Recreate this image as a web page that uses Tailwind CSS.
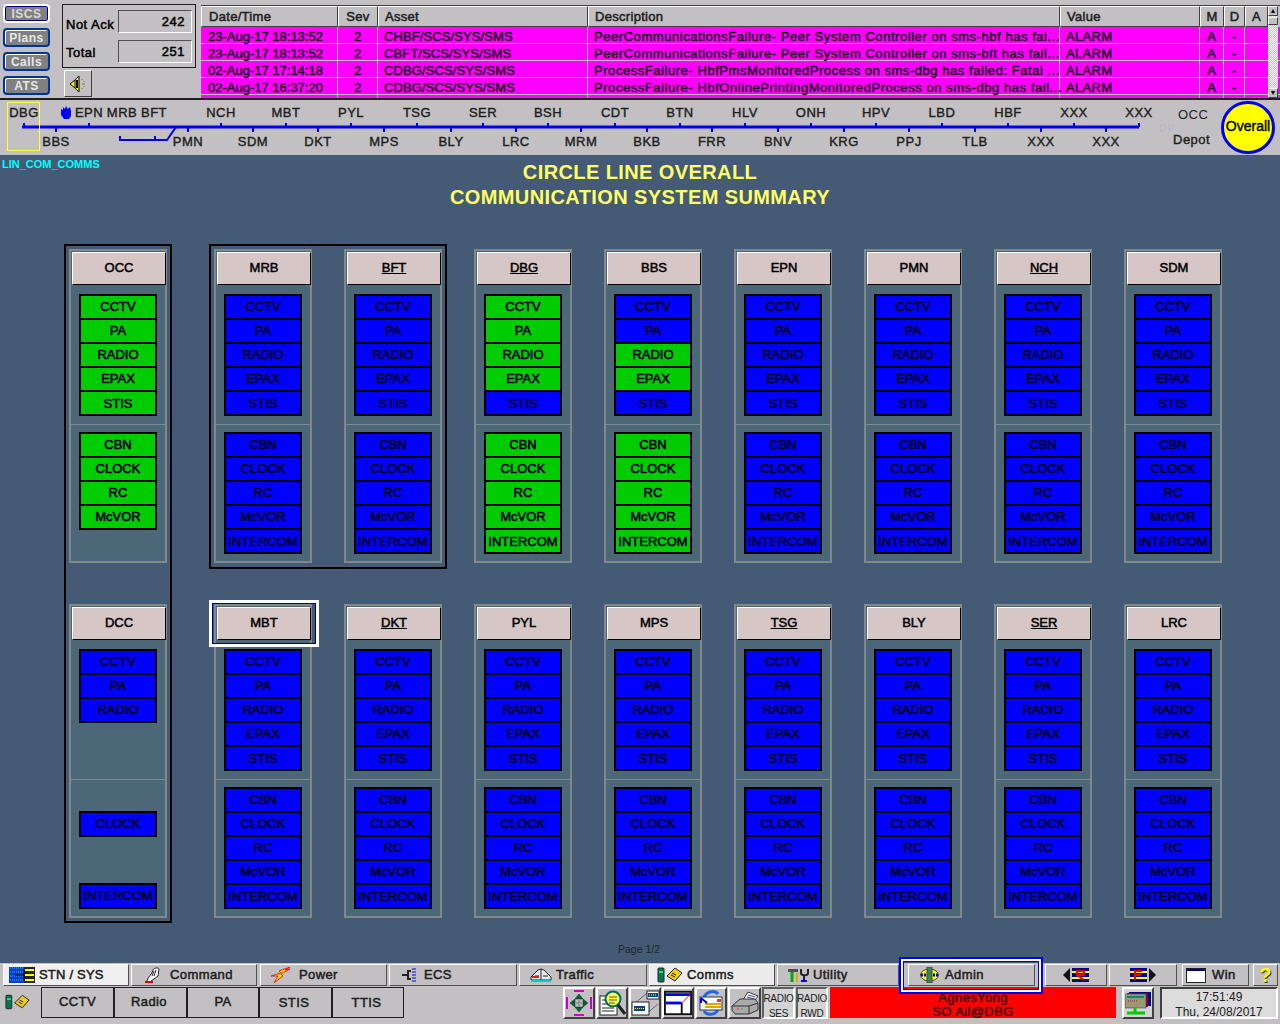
<!DOCTYPE html>
<html lang="en">

<head>
   <meta charset="UTF-8">
   <title>Communication System Summary</title>
   <script src="https://cdn.jsdelivr.net/npm/@tailwindcss/browser@4"></script>
</head>

<body class="bg-[#c3c0c3]">
   <div class="w-[1280px] h-[1024px] overflow-hidden flex flex-col font-['Liberation_Sans',sans-serif] text-black">

      <!-- alarm header -->
      <div class="h-[100px] flex border-b-2 border-[#202020] overflow-hidden">
         <div class="w-[62px] pl-[3px] pt-[4px] flex flex-col gap-[5px]">
            <div class="w-[47px] h-[19px] rounded-[4px] border-2 border-white bg-[#808080] text-[#d8d8d8] text-[12px] font-bold leading-[16px] tracking-[0.5px] text-center shadow-[inset_0_0_0_1px_#000080]">ISCS</div>
            <div class="w-[47px] h-[19px] rounded-[4px] border-2 border-[#003399] bg-[#808080] text-[#e8e8e8] text-[12px] font-bold leading-[16px] tracking-[0.5px] text-center shadow-[inset_1px_1px_0_#ffffff]">Plans</div>
            <div class="w-[47px] h-[19px] rounded-[4px] border-2 border-[#003399] bg-[#808080] text-[#e8e8e8] text-[12px] font-bold leading-[16px] tracking-[0.5px] text-center shadow-[inset_1px_1px_0_#ffffff]">Calls</div>
            <div class="w-[47px] h-[19px] rounded-[4px] border-2 border-[#003399] bg-[#808080] text-[#e8e8e8] text-[12px] font-bold leading-[16px] tracking-[0.5px] text-center shadow-[inset_1px_1px_0_#ffffff]">ATS</div>
         </div>
         <div class="w-[139px] pt-[4px]">
            <div class="w-[134px] h-[64px] border border-[#202020] pl-[3px] pr-[3px] pt-[5px] flex flex-col gap-[7px] text-[13px] tracking-[0.5px] [-webkit-text-stroke:0.5px_currentColor]">
               <div class="flex justify-between h-[23px]">
                  <span class="pt-[5px]">Not Ack</span>
                  <span class="w-[74px] h-[23px] border border-t-[#505050] border-l-[#505050] border-r-white border-b-white text-right pr-[6px] leading-[21px]">242</span>
               </div>
               <div class="flex justify-between h-[23px]">
                  <span class="pt-[3px]">Total</span>
                  <span class="w-[74px] h-[23px] border border-t-[#505050] border-l-[#505050] border-r-white border-b-white text-right pr-[6px] leading-[21px]">251</span>
               </div>
            </div>
            <div class="ml-[2px] mt-[2px] w-[28px] h-[27px] border border-t-white border-l-white border-r-[#404040] border-b-[#404040] flex items-center justify-center">
               <svg width="18" height="18" viewBox="0 0 18 18">
                  <path d="M1 9 L6 5 L10 1 V17 L6 13 Z" fill="#ffff00" stroke="#000" />
                  <path d="M6 5 V13" stroke="#000" />
                  <path d="M8 5 V13" stroke="#000" stroke-width="2" />
                  <path d="M13 4 V5 M15 6 V7 M13 9 H16 M15 11 V12 M13 13 V14" stroke="#707070" />
               </svg>
            </div>
         </div>
         <div class="flex-1 relative">
            <div class="mt-[5px] border-t border-[#404040] h-[93px] overflow-hidden" id="alarmTable"></div>
            <div class="absolute top-[6px] right-[2px] w-[10px] h-[92px] flex flex-col bg-[repeating-conic-gradient(#c3c0c3_0_25%,#ffffff_0_50%)] bg-[length:2px_2px]">
               <div class="h-[10px] bg-[#c3c0c3] border border-t-white border-l-white border-r-[#404040] border-b-[#404040] text-[7px] leading-[8px] text-center">▲</div>
               <div class="h-[8px] mt-px bg-[#c3c0c3] border border-t-white border-l-white border-r-[#404040] border-b-[#404040]"></div>
               <div class="mt-auto h-[10px] bg-[#c3c0c3] border border-t-white border-l-white border-r-[#404040] border-b-[#404040] text-[7px] leading-[8px] text-center">▼</div>
            </div>
         </div>
      </div>

      <!-- line map -->
      <div class="h-[55px] relative text-[13px] tracking-[0.5px] text-[#202020] [-webkit-text-stroke:0.4px_currentColor]" id="lineMap">
         <svg class="absolute left-0 top-0" width="1280" height="55" viewBox="0 0 1280 55">
            <path id="lineTicks" d="" stroke="#0000ee" stroke-width="2" fill="none" />
            <path d="M22 27 H1139" stroke="#0000ee" stroke-width="3" />
            <path d="M120 36 V40 H167 L176 27 M155 36 V40" stroke="#0000ee" stroke-width="2" fill="none" />
         </svg>
         <div class="absolute left-[7px] top-[2px] w-[33px] h-[49px] border border-[#ffff44]"></div>
         <svg class="absolute left-[60px] top-[6px]" width="12" height="13" viewBox="0 0 12 13">
            <path d="M1 3 L3 4 L3 1 L5 3 L6 0 L8 3 L10 1 L11 5 L11 10 L9 13 L4 13 L1 9 Z" fill="#0000ee" />
         </svg>
         <div class="absolute left-[1159px] top-[23px] text-[11px] leading-[11px] font-bold text-[#b8b8c4] [-webkit-text-stroke:0]">DP</div>
         <div class="absolute left-[1221px] top-[1px] w-[54px] h-[53px] rounded-full bg-[#ffff00] border-[3px] border-[#0000ee] flex items-center justify-center text-[14px] leading-[14px] pb-[3px] text-black tracking-normal">Overall</div>
      </div>

      <!-- summary page -->
      <div class="h-[808px] bg-[#445a75] relative">
         <div class="h-[94px]">
            <div class="pl-[2px] pt-[3px] h-[6px] text-[11px] leading-[12px] font-bold text-[#00ffff]">LIN_COM_COMMS</div>
            <div class="text-center text-[20px] leading-[25px] mt-[-4px] font-bold tracking-[0.4px] text-[#ffff66] pt-[3px]">
               <p>CIRCLE LINE OVERALL</p>
               <p>COMMUNICATION SYSTEM SUMMARY</p>
            </div>
         </div>
         <div class="flex pl-[69px] gap-[32px]" id="rowOne"></div>
         <div class="flex pl-[69px] gap-[32px] mt-[41px]" id="rowTwo"></div>
         <div class="absolute left-[64px] top-[89px] w-[108px] h-[679px] border-2 border-black"></div>
         <div class="absolute left-[209px] top-[89px] w-[238px] h-[325px] border-2 border-black"></div>
         <div class="absolute left-[209px] top-[445px] w-[110px] h-[47px] border-[3px] border-white">
            <div class="w-full h-full border border-[#000080]"></div>
         </div>
         <div class="absolute left-[618px] top-[787px] text-[10.5px] text-[#1c2430]">Page 1/2</div>
      </div>

      <!-- bottom bars -->
      <div class="h-[61px] text-[13px] tracking-[0.4px] text-[#202020] [-webkit-text-stroke:0.5px_currentColor]">
         <div class="flex pl-[3px] pt-px h-[23px]">
            <div class="w-[126px] h-[22px] bg-[#f0f0f0] border border-t-white border-l-white border-r-[#505050] border-b-[#505050] flex items-center pl-[5px] gap-[4px] tracking-[0.2px]">
               <svg width="26" height="16" viewBox="0 0 26 16">
                  <rect width="15" height="16" fill="#0044cc" />
                  <path d="M1 1H14M1 5H14M1 9H14M1 13H14" stroke="#6699ff" stroke-dasharray="1 1" />
                  <rect x="15" width="11" height="16" fill="#222" />
                  <path d="M16 3H25M16 8H25M16 13H25" stroke="#ffff00" stroke-width="2" />
                  <path d="M6 8H15M15 3V13" stroke="#000" />
               </svg>
               <span>STN / SYS</span>
            </div>
            <div class="ml-[2px] w-[126px] h-[22px] border border-t-white border-l-white border-r-[#505050] border-b-[#505050] flex items-center pl-[13px] gap-[9px]">
               <svg width="16" height="16" viewBox="0 0 16 16">
                  <path d="M2 14 C3 9 7 8 8 3 C9 1 13 0 14 2 L13 9 L9 12 L6 14" fill="#fff" stroke="#222" />
                  <path d="M9 4 L7 9 M11 3 L9 9" stroke="#222" />
                  <rect x="0" y="14" width="8" height="2" fill="#dd0000" />
               </svg>
               <span>Command</span>
            </div>
            <div class="ml-[3px] w-[127px] h-[22px] border border-t-white border-l-white border-r-[#505050] border-b-[#505050] flex items-center pl-[10px] gap-[8px]">
               <svg width="20" height="16" viewBox="0 0 20 16">
                  <path d="M19 0 L8 4 L10 6 L0 9 L7 9 L3 16 L12 9 L10 7 L19 2 L14 3 Z" fill="#ffdd00" stroke="#e00000" stroke-width="0.8" />
               </svg>
               <span>Power</span>
            </div>
            <div class="ml-[2px] w-[128px] h-[22px] border border-t-white border-l-white border-r-[#505050] border-b-[#505050] flex items-center pl-[12px] gap-[7px]">
               <svg width="15" height="14" viewBox="0 0 15 14">
                  <path d="M0 7 H5 M6 2 V12 M6 3 H9 M6 11 H9" stroke="#222" stroke-width="2" />
                  <path d="M10 1 H15 M10 4 H15 M10 7 H15 M10 10 H15 M10 13 H15" stroke="#0000ee" stroke-dasharray="4 1" />
               </svg>
               <span>ECS</span>
            </div>
            <div class="ml-[2px] w-[128px] h-[22px] border border-t-white border-l-white border-r-[#505050] border-b-[#505050] flex items-center pl-[10px] gap-[4px]">
               <svg width="22" height="14" viewBox="0 0 22 14">
                  <path d="M1 9 L8 2 L11 1 L14 2 L21 9 V12 H1 Z" fill="#e8e8e8" stroke="#222" />
                  <path d="M11 1 V12 M5 8 H9 M13 8 H18" stroke="#222" />
                  <path d="M2 9 H9" stroke="#dd2222" stroke-width="2" />
                  <path d="M1 13 H21" stroke="#00cccc" stroke-width="2" />
               </svg>
               <span>Traffic</span>
            </div>
            <div class="ml-[2px] w-[126px] h-[22px] bg-[#ececec] border border-t-white border-l-white border-r-[#505050] border-b-[#505050] flex items-center pl-[7px] gap-[4px]">
               <svg width="26" height="16" viewBox="0 0 26 16">
                  <rect x="1" y="1" width="6" height="14" rx="1" fill="#007755" stroke="#222" />
                  <rect x="2" y="4" width="4" height="2" fill="#33dd88" />
                  <path d="M10 9 L18 1 L25 6 L18 14 Z" fill="#eecc22" stroke="#222" />
                  <path d="M15 6 L19 8 M14 8 L18 10" stroke="#222" />
               </svg>
               <span>Comms</span>
            </div>
            <div class="ml-[2px] w-[122px] h-[22px] border border-t-white border-l-white border-r-[#505050] border-b-[#505050] flex items-center pl-[9px] gap-[3px]">
               <svg width="23" height="16" viewBox="0 0 23 16">
                  <path d="M1 2 H11 V5 H1 Z" fill="#505050" />
                  <path d="M5 5 V15" stroke="#00aa00" stroke-width="3" />
                  <path d="M10 6 V15" stroke="#ddaa00" stroke-width="2" />
                  <path d="M14 2 V6 C14 9 21 9 21 6 V2 M17 9 V15" stroke="#222" stroke-width="2" fill="none" />
                  <path d="M14 14 H20" stroke="#0000ee" stroke-width="2" />
               </svg>
               <span>Utility</span>
            </div>
            <div class="ml-[9px] w-[127px] h-[22px] relative border border-t-white border-l-white border-r-[#505050] border-b-[#505050] flex items-center pl-[11px] gap-[6px]">
               <svg width="19" height="16" viewBox="0 0 19 16">
                  <ellipse cx="9.5" cy="8" rx="9" ry="6" fill="#ffff00" stroke="#444" />
                  <path d="M1 8 H18" stroke="#0000ee" stroke-width="3" stroke-dasharray="2 1" />
                  <rect x="7" y="0" width="5" height="16" fill="#338855" stroke="#444" />
               </svg>
               <span>Admin</span>
               <div class="absolute left-[-10px] top-[-8px] w-[144px] h-[37px] border-2 border-[#0000ee]">
                  <div class="w-full h-full border-2 border-white">
                     <div class="w-full h-full border border-[#0000ee]"></div>
                  </div>
               </div>
            </div>
            <div class="ml-[10px] w-[62px] h-[22px] border border-t-white border-l-white border-r-[#505050] border-b-[#505050] flex items-center justify-center">
               <svg width="26" height="14" viewBox="0 0 26 14">
                  <path d="M0 7 L7 0 V14 Z" fill="#111" />
                  <rect x="9" width="17" height="14" fill="#000088" />
                  <rect x="9" y="3" width="17" height="2" fill="#ffff00" />
                  <rect x="9" y="9" width="17" height="2" fill="#ffff00" />
                  <path d="M14 3 H21 V7 H14 Z M14 7 L21 12" stroke="#ee0000" stroke-width="2" fill="none" />
               </svg>
            </div>
            <div class="ml-[2px] w-[68px] h-[22px] border border-t-white border-l-white border-r-[#505050] border-b-[#505050] flex items-center justify-center">
               <svg width="26" height="14" viewBox="0 0 26 14">
                  <path d="M26 7 L19 0 V14 Z" fill="#111" />
                  <rect width="17" height="14" fill="#000088" />
                  <rect y="3" width="17" height="2" fill="#ffff00" />
                  <rect y="9" width="17" height="2" fill="#ffff00" />
                  <path d="M12 3 H5 V12 M5 7 H11" stroke="#ee0000" stroke-width="2" fill="none" />
               </svg>
            </div>
            <div class="ml-[5px] w-[67px] h-[22px] border border-t-white border-l-white border-r-[#505050] border-b-[#505050] flex items-center pl-[3px] gap-[6px]">
               <svg width="20" height="15" viewBox="0 0 20 15">
                  <rect x="0.5" y="0.5" width="19" height="14" fill="#fff" stroke="#222" />
                  <rect x="1" y="1" width="18" height="2" fill="#000088" />
               </svg>
               <span>Win</span>
            </div>
            <div class="ml-[4px] w-[25px] h-[22px] border border-t-white border-l-white border-r-[#505050] border-b-[#505050] text-center text-[#ffff00] text-[20px] leading-[20px] font-bold [text-shadow:1px_1px_#333] [-webkit-text-stroke:0]">?</div>
         </div>
         <div class="flex items-start mt-px">
            <div class="w-[41px] h-[31px] pl-[5px] pt-[7px]">
               <svg width="25" height="16" viewBox="0 0 26 16">
                  <rect x="1" y="1" width="6" height="14" rx="1" fill="#007755" stroke="#222" />
                  <rect x="2" y="4" width="4" height="2" fill="#33dd88" />
                  <path d="M10 9 L18 1 L25 6 L18 14 Z" fill="#eecc22" stroke="#222" />
                  <path d="M15 6 L19 8 M14 8 L18 10" stroke="#222" />
               </svg>
            </div>
            <div class="w-[73px] h-[31px] border border-[#202020] text-center leading-[28px]">CCTV</div>
            <div class="w-[73px] h-[31px] border border-[#202020] pr-[3px] text-center leading-[28px]">Radio</div>
            <div class="w-[72px] h-[31px] border border-[#202020] text-center leading-[28px]">PA</div>
            <div class="w-[73px] h-[31px] border border-[#202020] pr-[3px] text-center leading-[30px]">STIS</div>
            <div class="w-[72px] h-[31px] border border-[#202020] pr-[3px] text-center leading-[30px]">TTIS</div>
            <div class="ml-[159px] flex gap-[1px]">
               <div class="w-[32px] h-[32px] border-2 border-t-white border-l-white border-r-[#404040] border-b-[#404040] flex items-center justify-center">
                  <svg width="26" height="26" viewBox="0 0 26 26">
                     <path d="M1 7 V19 M25 7 V19 M8 1 H18 M8 25 H18" stroke="#cc00cc" stroke-width="2" />
                     <path d="M13 4 L9 9 H17 Z M13 22 L9 17 H17 Z M4 13 L9 9 V17 Z M22 13 L17 9 V17 Z" fill="#006633" stroke="#222" stroke-width="0.5" />
                     <path d="M13 9 V17 M9 13 H17" stroke="#999" stroke-width="2" />
                  </svg>
               </div>
               <div class="w-[32px] h-[32px] border-2 border-t-white border-l-white border-r-[#404040] border-b-[#404040] flex items-center justify-center">
                  <svg width="28" height="26" viewBox="0 0 28 26">
                     <rect x="2" y="6" width="17" height="19" fill="#fff" stroke="#222" />
                     <path d="M4 10 H9 M4 14 H9 M4 18 H16 M4 21 H16" stroke="#222" />
                     <circle cx="15" cy="9" r="7.500" fill="#ffff44" stroke="#006666" stroke-width="2" />
                     <path d="M11 7 H19 M11 10 H19 M11 13 H17" stroke="#555" />
                     <path d="M20 15 L27 24" stroke="#222" stroke-width="3" />
                  </svg>
               </div>
               <div class="w-[32px] h-[32px] border-2 border-t-white border-l-white border-r-[#404040] border-b-[#404040] flex items-center justify-center">
                  <svg width="28" height="26" viewBox="0 0 28 26">
                     <path d="M3 14 L16 3 M14 25 L27 14" stroke="#666" />
                     <rect x="16" y="1" width="12" height="8" fill="#fff" stroke="#222" />
                     <rect x="17" y="3" width="10" height="4" fill="#0044aa" />
                     <rect x="1" y="12" width="17" height="13" fill="#fff" stroke="#222" />
                     <rect x="3" y="16" width="11" height="5" fill="#0044aa" />
                     <path d="M4 18.500 H13 M18 5 H26" stroke="#ffff00" stroke-dasharray="1 1" />
                  </svg>
               </div>
               <div class="w-[32px] h-[32px] border-2 border-t-white border-l-white border-r-[#404040] border-b-[#404040] flex items-center justify-center">
                  <svg width="30" height="26" viewBox="0 0 30 26">
                     <rect x="1" y="1" width="28" height="24" fill="#fff" stroke="#111" stroke-width="2" />
                     <path d="M1 4 H29" stroke="#0000ee" stroke-width="3" />
                     <path d="M2 13 H19" stroke="#0000ee" stroke-width="3" />
                     <path d="M19 13 V25" stroke="#111" stroke-width="2" />
                     <path d="M19 13 L29 3" stroke="#ee0000" />
                  </svg>
               </div>
               <div class="w-[32px] h-[32px] border-2 border-t-white border-l-white border-r-[#404040] border-b-[#404040] flex items-center justify-center">
                  <svg width="26" height="26" viewBox="0 0 26 26">
                     <path d="M6 7 C9 1 17 0 20 4" stroke="#2266ee" stroke-width="3" fill="none" />
                     <path d="M20 20 C17 25 9 26 6 21" stroke="#2266ee" stroke-width="3" fill="none" />
                     <rect x="2" y="7" width="22" height="13" fill="#fff" stroke="#333" />
                     <path d="M7 14 H23 M7 17 H23" stroke="#ddaa00" stroke-width="2" />
                     <path d="M3 8 L9 13 M3 8 L3 13" stroke="#0000ee" stroke-width="2" />
                     <rect x="19" y="9" width="4" height="3" fill="#ee3333" />
                  </svg>
               </div>
               <div class="w-[33px] h-[32px] border-2 border-t-white border-l-white border-r-[#404040] border-b-[#404040] flex items-center justify-center">
                  <svg width="28" height="24" viewBox="0 0 28 24">
                     <path d="M12 9 L17 1 L27 5 L21 13 Z" fill="#fff" stroke="#333" />
                     <path d="M16 6 L23 8 M17 4 L24 6" stroke="#2244aa" />
                     <path d="M1 15 L9 8 H24 L27 12 V19 L18 23 H4 L1 19 Z" fill="#aaa" stroke="#333" />
                     <path d="M1 15 H18 L27 12 M18 15 V23" stroke="#333" fill="none" />
                     <path d="M6 18 H8" stroke="#ee3333" />
                     <path d="M10 18 H12" stroke="#33aa33" />
                  </svg>
               </div>
               <div class="w-[33px] h-[32px] bg-[#d4d4d4] border-2 border-t-[#606060] border-l-[#606060] border-r-white border-b-white flex flex-col items-center text-[10px] leading-[15px] tracking-[-0.3px] pt-[2px] [-webkit-text-stroke:0]">
                  <span>RADIO</span><span>SES</span>
               </div>
               <div class="w-[32px] h-[32px] bg-[#d4d4d4] border-2 border-t-[#606060] border-l-[#606060] border-r-white border-b-white flex flex-col items-center text-[10px] leading-[15px] tracking-[-0.3px] pt-[2px] [-webkit-text-stroke:0]">
                  <span>RADIO</span><span>RWD</span>
               </div>
               <div class="ml-[1px] w-[286px] h-[31px] bg-[#ff0000] text-[#400000] text-center text-[13px] leading-[14px] pt-[4px]">
                  <p>AgnesYong</p>
                  <p>SO All@DBG</p>
               </div>
               <div class="ml-[5px] w-[32px] h-[32px] bg-[#d4d4d4] border-2 border-t-white border-l-white border-r-[#404040] border-b-[#404040] flex items-center justify-center">
                  <svg width="26" height="24" viewBox="0 0 26 24">
                     <rect x="4" y="1" width="22" height="14" fill="#000088" />
                     <rect x="2" y="2" width="21" height="14" fill="#880044" />
                     <rect x="0" y="3" width="21" height="14" fill="#999977" stroke="#333" stroke-width="0.5" />
                     <path d="M2 6 H19" stroke="#008888" stroke-width="2" />
                     <path d="M3 10 H12" stroke="#ee0000" stroke-dasharray="1 1" />
                     <path d="M10 17 V21 M2 22 H20" stroke="#00cc00" stroke-width="3" />
                  </svg>
               </div>
               <div class="ml-[5px] w-[118px] h-[32px] bg-[#dcdcdc] border-2 border-t-[#404040] border-l-[#404040] border-r-white border-b-white text-center text-[12px] leading-[15px] tracking-normal pt-[1px] [-webkit-text-stroke:0]">
                  <p>17:51:49</p>
                  <p>Thu, 24/08/2017</p>
               </div>
            </div>
         </div>
      </div>
   </div>

   <script>
      const alarms = [
         ["23-Aug-17 18:13:52", "CHBF/SCS/SYS/SMS", "PeerCommunicationsFailure- Peer System Controller on sms-hbf has fai..."],
         ["23-Aug-17 18:13:52", "CBFT/SCS/SYS/SMS", "PeerCommunicationsFailure- Peer System Controller on sms-bft has fail..."],
         ["02-Aug-17 17:14:18", "CDBG/SCS/SYS/SMS", "ProcessFailure- HbfPmsMonitoredProcess on sms-dbg has failed: Fatal ..."],
         ["02-Aug-17 16:37:20", "CDBG/SCS/SYS/SMS", "ProcessFailure- HbfOnlinePrintingMonitoredProcess on sms-dbg has fail..."],
         ["", "", ""]
      ];

      const renderAlarmRow = (item) => `
         <div class="flex h-[17px] bg-[#ff00ff] border-b border-[#c3c0c3] text-[13px] [-webkit-text-stroke:0.5px_currentColor] leading-[19px] text-[#200020] whitespace-nowrap">
            <div class="w-[137px] pl-[7px] border-r border-[#c3c0c3]">${item[0]}</div>
            <div class="w-[40px] text-center border-r border-[#c3c0c3]">${item[0] ? 2 : ""}</div>
            <div class="w-[210px] pl-[6px] tracking-[0.1px] border-r border-[#c3c0c3]">${item[1]}</div>
            <div class="w-[472px] pl-[6px] tracking-[0.55px] border-r border-[#c3c0c3]">${item[2]}</div>
            <div class="w-[140px] pl-[6px] tracking-[0.3px] border-r border-[#c3c0c3]">${item[0] ? "ALARM" : ""}</div>
            <div class="w-[24px] text-center border-r border-[#c3c0c3]">${item[0] ? "A" : ""}</div>
            <div class="w-[21px] text-center border-r border-[#c3c0c3]">${item[0] ? "-" : ""}</div>
            <div class="w-[23px]"></div>
         </div>`;

      const headCell = (text, widthClass, extra) => `<div class="${widthClass} ${extra} h-[21px] border border-t-white border-l-white border-r-[#404040] border-b-[#404040] leading-[20px]">${text}</div>`;

      document.getElementById("alarmTable").innerHTML = `
         <div class="flex h-[21px] text-[13px] tracking-[0.3px] [-webkit-text-stroke:0.5px_currentColor] text-[#202020]">
            ${headCell("Date/Time", "w-[137px]", "pl-[7px]")}
            ${headCell("Sev", "w-[40px]", "text-center")}
            ${headCell("Asset", "w-[210px]", "pl-[6px]")}
            ${headCell("Description", "w-[472px]", "pl-[6px]")}
            ${headCell("Value", "w-[140px]", "pl-[6px]")}
            ${headCell("M", "w-[24px]", "text-center")}
            ${headCell("D", "w-[21px]", "text-center")}
            ${headCell("A", "w-[23px]", "text-center")}
         </div>
         ${alarms.map(renderAlarmRow).join("")}`;

      const topStations = [["DBG", 24], ["EPN", 89], ["MRB", 122], ["BFT", 154], ["NCH", 221], ["MBT", 286], ["PYL", 351], ["TSG", 417], ["SER", 483], ["BSH", 548], ["CDT", 615], ["BTN", 680], ["HLV", 745], ["ONH", 811], ["HPV", 876], ["LBD", 942], ["HBF", 1008], ["XXX", 1074], ["XXX", 1139]];
      const bottomStations = [["BBS", 56], ["PMN", 188], ["SDM", 253], ["DKT", 318], ["MPS", 384], ["BLY", 451], ["LRC", 516], ["MRM", 581], ["BKB", 647], ["FRR", 712], ["BNV", 778], ["KRG", 844], ["PPJ", 909], ["TLB", 975], ["XXX", 1041], ["XXX", 1106]];

      const lineMap = document.getElementById("lineMap");
      let ticks = "";
      let labels = "";
      for (const [name, x] of topStations) {
         if (name !== "MRB" && name !== "BFT") ticks += `M${x} 23 V27 `;
         labels += `<div class="absolute top-[3px] -translate-x-1/2" style="left:${x}px">${name}</div>`;
      }
      for (const [name, x] of bottomStations) {
         ticks += `M${x} 27 V32 `;
         labels += `<div class="absolute top-[32px] -translate-x-1/2" style="left:${x}px">${name}</div>`;
      }
      labels += `<div class="absolute top-[5px] left-[1178px] [-webkit-text-stroke:0]">OCC</div>`;
      labels += `<div class="absolute top-[30px] left-[1173px]">Depot</div>`;
      document.getElementById("lineTicks").setAttribute("d", ticks);
      lineMap.insertAdjacentHTML("beforeend", labels);

      const GREEN = "bg-[#00cc00]";
      const BLUE = "bg-[#0000ff]";
      const topNames = ["CCTV", "PA", "RADIO", "EPAX", "STIS"];
      const bottomNames = ["CBN", "CLOCK", "RC", "McVOR", "INTERCOM"];

      const renderGroup = (names, greens = []) => `
         <div class="ml-[8px] w-[78px] bg-black p-[2px] flex flex-col gap-[2px]">
            ${names.map((name, index) => `<div class="h-[22px] ${greens.includes(name) ? GREEN : BLUE} text-center text-[13px] ${index === 4 ? "leading-[24px]" : "leading-[22px]"} [-webkit-text-stroke:0.6px_currentColor] text-[#000020]">${name}</div>`).join("")}
         </div>`;

      const renderPanel = (p) => `
         <div class="w-[98px] h-[314px] shrink-0 border-2 border-[#808a8a] bg-[#4c6878]">
            <div class="ml-px mt-px w-[94px] h-[33px] bg-[#d6c6c6] border border-t-white border-l-white border-r-black border-b-black text-center text-[13px] leading-[30px] [-webkit-text-stroke:0.5px_currentColor] ${p.underline ? "underline" : ""}">${p.name}</div>
            <div class="mt-[9px] h-[122px]">${p.top ?? renderGroup(topNames, p.greenTop)}</div>
            <div class="mt-[8px] h-px bg-[#808a8a]"></div>
            <div class="mt-[7px]">${p.bottom ?? renderGroup(bottomNames, p.greenBottom)}</div>
         </div>`;

      const rowOne = [
         { name: "OCC", greenTop: topNames, bottom: renderGroup(bottomNames.slice(0, 4), bottomNames) },
         { name: "MRB" },
         { name: "BFT", underline: true },
         { name: "DBG", underline: true, greenTop: ["CCTV", "PA", "RADIO", "EPAX"], greenBottom: bottomNames },
         { name: "BBS", greenTop: ["RADIO", "EPAX"], greenBottom: bottomNames },
         { name: "EPN" },
         { name: "PMN" },
         { name: "NCH", underline: true },
         { name: "SDM" }
      ];
      const rowTwo = [
         {
            name: "DCC",
            top: renderGroup(["CCTV", "PA", "RADIO"]),
            bottom: `<div class="mt-[31px]">${renderGroup(["CLOCK"])}</div><div class="mt-[46px]">${renderGroup(["INTERCOM"])}</div>`
         },
         { name: "MBT" },
         { name: "DKT", underline: true },
         { name: "PYL" },
         { name: "MPS" },
         { name: "TSG", underline: true },
         { name: "BLY" },
         { name: "SER", underline: true },
         { name: "LRC" }
      ];

      const renderRow = (id, panels) => {
         document.getElementById(id).innerHTML = panels
            .map((p, index) => `<div class="${index === 1 ? "ml-[15px]" : ""}">${renderPanel(p)}</div>`)
            .join("");
      };
      renderRow("rowOne", rowOne);
      renderRow("rowTwo", rowTwo);
   </script>

</body>

</html>
